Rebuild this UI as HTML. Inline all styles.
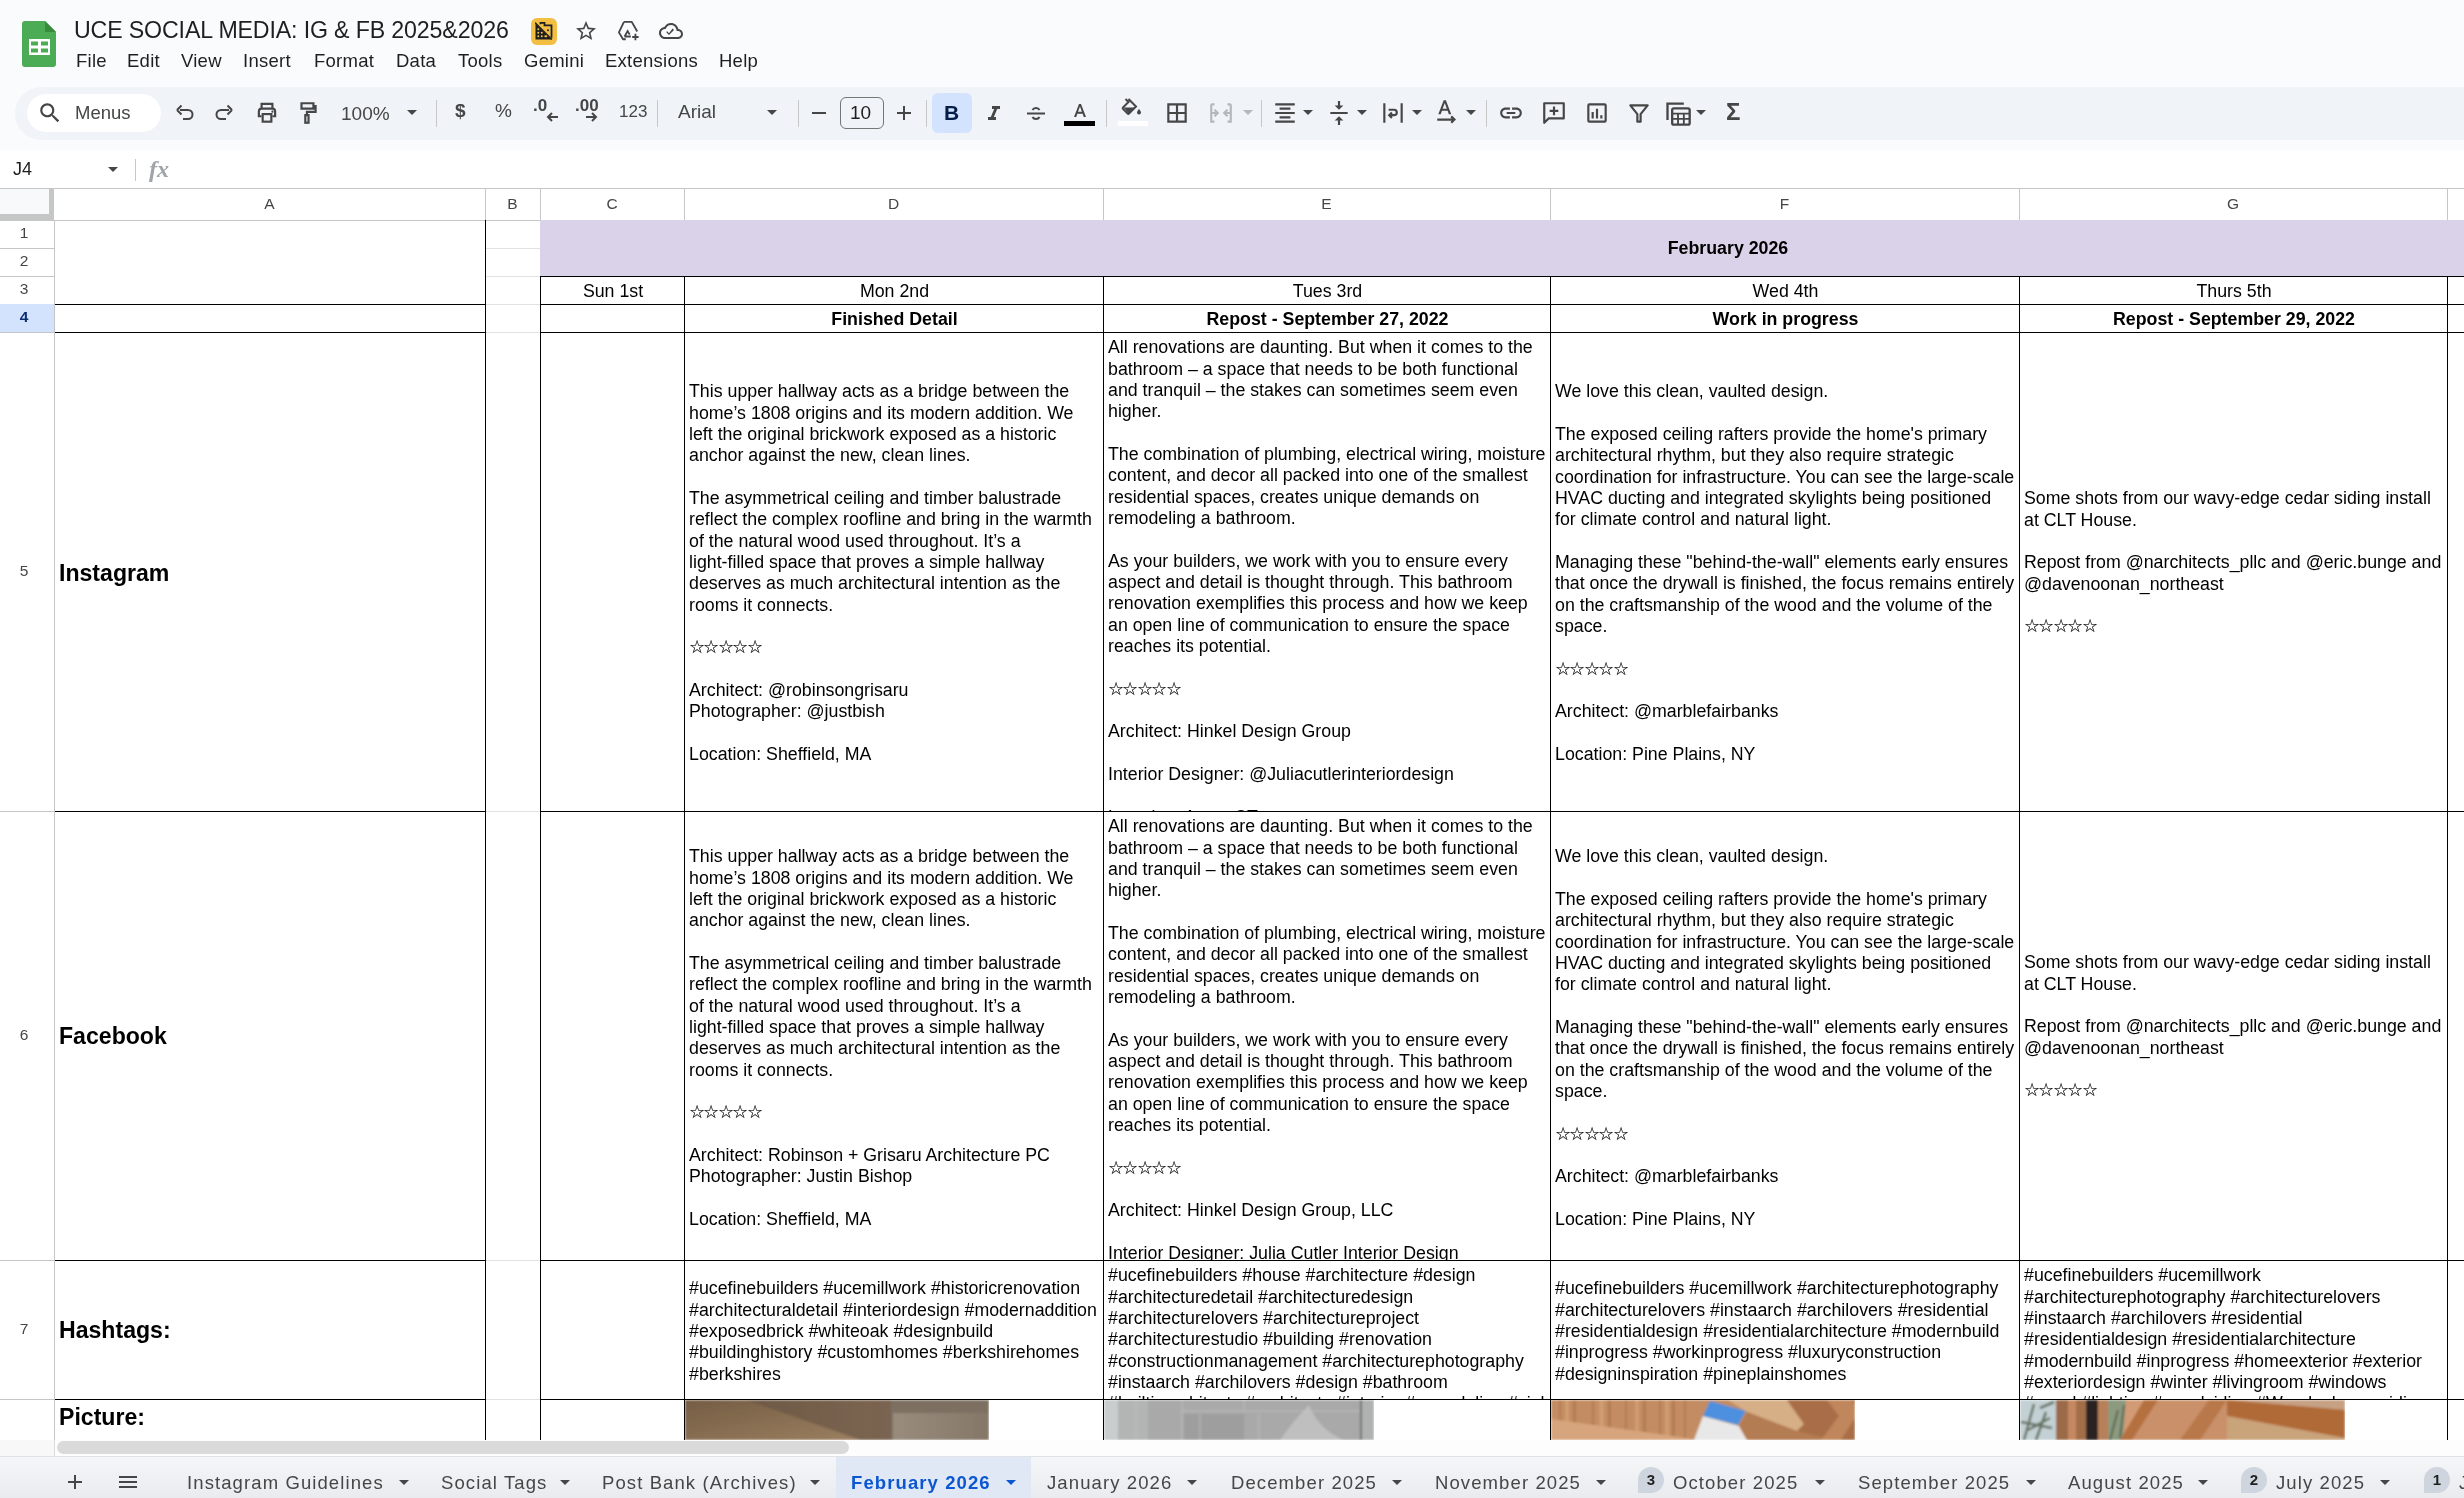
<!DOCTYPE html><html><head><meta charset="utf-8"><style>
html,body{margin:0;padding:0;}
body{width:2464px;height:1498px;overflow:hidden;position:relative;background:#f9fbfd;font-family:"Liberation Sans",sans-serif;color:#000;}
.cell{position:absolute;overflow:hidden;}
.ct{position:absolute;left:0;white-space:pre;font-size:17.78px;line-height:21.33px;}
.ic{position:absolute;}
</style></head><body><div style="position:absolute;left:0;top:0;width:2464px;height:1498px;will-change:transform">
<svg style="position:absolute;left:22px;top:21px" width="35" height="46" viewBox="0 0 35 46">
<path d="M3 0H23L34 11V43a3 3 0 0 1-3 3H3a3 3 0 0 1-3-3V3a3 3 0 0 1 3-3z" fill="#4cab55"/>
<path d="M23 0L34 11H23z" fill="#388a3c"/>
<rect x="7" y="18" width="21" height="16" fill="#fff"/>
<rect x="9" y="20.5" width="7" height="4" fill="#4cab55"/><rect x="19" y="20.5" width="7" height="4" fill="#4cab55"/>
<rect x="9" y="27.5" width="7" height="4" fill="#4cab55"/><rect x="19" y="27.5" width="7" height="4" fill="#4cab55"/>
</svg>
<div style="position:absolute;left:74px;top:14px;white-space:pre;font-size:23.2px;line-height:32px;color:#1f1f1f;letter-spacing:-0.15px;">UCE SOCIAL MEDIA: IG &amp; FB 2025&amp;2026</div>
<div style="position:absolute;left:531px;top:18px;width:26px;height:27px;border-radius:6px;background:#f2bf42"></div>
<svg style="position:absolute;left:535px;top:22px" width="18" height="18" viewBox="0 0 18 18">
<path d="M0.5 1.5L16.5 17.5H0.5z" fill="#1f1f1f"/>
<path d="M5.5 2.2V0.8h4v2.6h7v12.4" fill="none" stroke="#1f1f1f" stroke-width="1.8"/>
<circle cx="13" cy="8.3" r="1" fill="#1f1f1f"/>
<g fill="#f2bf42"><rect x="2.3" y="6.3" width="2" height="2" rx="1"/><rect x="2.3" y="9.8" width="2" height="2" rx="1"/><rect x="5.8" y="9.8" width="2" height="2" rx="1"/><rect x="2.3" y="13.3" width="2" height="2" rx="1"/><rect x="5.8" y="13.3" width="2" height="2" rx="1"/><rect x="9.3" y="13.3" width="3" height="2" rx="1"/></g>
<path d="M0 0.5L17 17.5" stroke="#1f1f1f" stroke-width="1.3"/>
</svg>
<svg style="position:absolute;left:574px;top:19px" width="24" height="24" viewBox="0 0 24 24" fill="#444746"><path d="M22 9.24l-7.19-.62L12 2 9.19 8.63 2 9.24l5.46 4.73L5.82 21 12 17.27 18.18 21l-1.63-7.03L22 9.24zM12 15.4l-3.76 2.27 1-4.28-3.32-2.88 4.38-.38L12 6.1l1.71 4.04 4.38.38-3.32 2.88 1 4.28L12 15.4z"/></svg>
<svg style="position:absolute;left:616px;top:20px" width="26" height="22" viewBox="0 0 26 24" fill="#444746"><path d="M7.5 2h8.5l6 10.5M9.5 21H6.5L2 13.5 7.5 2" fill="none" stroke="#444746" stroke-width="2" stroke-linejoin="round"/><path d="M8 18h7M8.2 18L11.5 12l2.3 4" fill="none" stroke="#444746" stroke-width="2"/><path d="M20 15v7M16.5 18.5h7" stroke="#444746" stroke-width="2"/></svg>
<svg style="position:absolute;left:659px;top:19px" width="24" height="24" viewBox="0 0 24 24" fill="#444746"><path d="M19.35 10.04C18.67 6.59 15.64 4 12 4 9.11 4 6.6 5.64 5.35 8.04 2.34 8.36 0 10.91 0 14c0 3.31 2.69 6 6 6h13c2.76 0 5-2.24 5-5 0-2.64-2.05-4.78-4.65-4.96zM19 18H6c-2.21 0-4-1.79-4-4 0-2.05 1.53-3.76 3.56-3.97l1.07-.11.5-.95C8.08 7.14 9.94 6 12 6c2.62 0 4.88 1.86 5.39 4.43l.3 1.5 1.53.11c1.56.1 2.78 1.41 2.78 2.96 0 1.650-1.35 3-3 3zm-9-3.82l-2.090-2.09L7.5 13.5 10 16l5.01-5.01-1.41-1.41z"/></svg>
<div style="position:absolute;left:76px;top:49px;white-space:pre;font-size:18.5px;line-height:24px;color:#1f1f1f;letter-spacing:0.25px;">File</div>
<div style="position:absolute;left:127px;top:49px;white-space:pre;font-size:18.5px;line-height:24px;color:#1f1f1f;letter-spacing:0.25px;">Edit</div>
<div style="position:absolute;left:181px;top:49px;white-space:pre;font-size:18.5px;line-height:24px;color:#1f1f1f;letter-spacing:0.25px;">View</div>
<div style="position:absolute;left:243px;top:49px;white-space:pre;font-size:18.5px;line-height:24px;color:#1f1f1f;letter-spacing:0.25px;">Insert</div>
<div style="position:absolute;left:314px;top:49px;white-space:pre;font-size:18.5px;line-height:24px;color:#1f1f1f;letter-spacing:0.25px;">Format</div>
<div style="position:absolute;left:396px;top:49px;white-space:pre;font-size:18.5px;line-height:24px;color:#1f1f1f;letter-spacing:0.25px;">Data</div>
<div style="position:absolute;left:458px;top:49px;white-space:pre;font-size:18.5px;line-height:24px;color:#1f1f1f;letter-spacing:0.25px;">Tools</div>
<div style="position:absolute;left:524px;top:49px;white-space:pre;font-size:18.5px;line-height:24px;color:#1f1f1f;letter-spacing:0.25px;">Gemini</div>
<div style="position:absolute;left:605px;top:49px;white-space:pre;font-size:18.5px;line-height:24px;color:#1f1f1f;letter-spacing:0.25px;">Extensions</div>
<div style="position:absolute;left:719px;top:49px;white-space:pre;font-size:18.5px;line-height:24px;color:#1f1f1f;letter-spacing:0.25px;">Help</div>
<div style="position:absolute;left:15px;top:87px;width:2500px;height:53px;border-radius:27px;background:#f0f3f8"></div>
<div style="position:absolute;left:27px;top:94px;width:134px;height:38px;border-radius:19px;background:#fff"></div>
<svg style="position:absolute;left:37px;top:100px" width="26" height="26" viewBox="0 0 24 24" fill="#444746"><path d="M15.5 14h-.79l-.28-.27C15.41 12.59 16 11.11 16 9.5 16 5.91 13.09 3 9.5 3S3 5.91 3 9.5 5.91 16 9.5 16c1.61 0 3.09-.59 4.23-1.57l.27.28v.79l5 4.99L20.49 19l-4.99-5zm-6 0C7.010 14 5 11.99 5 9.5S7.01 5 9.5 5 14 7.01 14 9.5 11.99 14 9.5 14z"/></svg>
<div style="position:absolute;left:75px;top:101px;white-space:pre;font-size:18.5px;line-height:24px;color:#444746;">Menus</div>
<svg style="position:absolute;left:172px;top:101px" width="24" height="24" viewBox="0 0 24 24" fill="#444746"><path d="M8 9H16a4.5 4.5 0 0 1 0 9H11" fill="none" stroke="#444746" stroke-width="2"/><path d="M5 9l4.5-4.5M5 9l4.5 4.5" fill="none" stroke="#444746" stroke-width="2"/></svg>
<svg style="position:absolute;left:213px;top:101px" width="24" height="24" viewBox="0 0 24 24" fill="#444746"><path d="M16 9H8a4.5 4.5 0 0 0 0 9H13" fill="none" stroke="#444746" stroke-width="2"/><path d="M19 9l-4.5-4.5M19 9l-4.5 4.5" fill="none" stroke="#444746" stroke-width="2"/></svg>
<svg style="position:absolute;left:254px;top:100px" width="26" height="26" viewBox="0 0 24 24" fill="#444746"><path d="M7 8V3.5h10V8M7 15H4.5V10.5a2.5 2.5 0 0 1 2.5-2.5h10a2.5 2.5 0 0 1 2.5 2.5V15H17" fill="none" stroke="#444746" stroke-width="2"/><rect x="8" y="13" width="8" height="7" fill="none" stroke="#444746" stroke-width="2"/><circle cx="17" cy="10.8" r="1"/></svg>
<svg style="position:absolute;left:295px;top:100px" width="26" height="26" viewBox="0 0 24 24" fill="#444746"><path d="M6 3h11v5H6zM17 5.5h2V11h-8v3" fill="none" stroke="#444746" stroke-width="2"/><rect x="9.5" y="14" width="3" height="7" fill="none" stroke="#444746" stroke-width="2"/></svg>
<div style="position:absolute;left:341px;top:102px;white-space:pre;font-size:19px;line-height:24px;color:#444746;">100%</div>
<svg style="position:absolute;left:404px;top:104px" width="16" height="16" viewBox="0 0 16 16" fill="#444746"><path d="M3 6l5 5 5-5z"/></svg>
<div style="position:absolute;left:436px;top:100px;width:1px;height:27px;background:#c7c7c7"></div>
<div style="position:absolute;left:455px;top:99px;white-space:pre;font-size:19px;line-height:24px;color:#444746;font-weight:bold;">$</div>
<div style="position:absolute;left:495px;top:99px;white-space:pre;font-size:19px;line-height:24px;color:#444746;">%</div>
<div style="position:absolute;left:533px;top:96px;white-space:pre;font-size:17px;line-height:20px;color:#444746;font-weight:bold;">.0</div>
<svg style="position:absolute;left:544px;top:110px" width="16" height="14" viewBox="0 0 16 14" fill="#444746"><path d="M14 7H4M8 3L4 7l4 4" fill="none" stroke="#444746" stroke-width="2"/></svg>
<div style="position:absolute;left:575px;top:96px;white-space:pre;font-size:17px;line-height:20px;color:#444746;font-weight:bold;">.00</div>
<svg style="position:absolute;left:584px;top:110px" width="16" height="14" viewBox="0 0 16 14" fill="#444746"><path d="M2 7h10M8 3l4 4-4 4" fill="none" stroke="#444746" stroke-width="2"/></svg>
<div style="position:absolute;left:619px;top:101px;white-space:pre;font-size:17px;line-height:22px;color:#444746;">123</div>
<div style="position:absolute;left:657px;top:100px;width:1px;height:27px;background:#c7c7c7"></div>
<div style="position:absolute;left:678px;top:100px;white-space:pre;font-size:19px;line-height:24px;color:#444746;">Arial</div>
<svg style="position:absolute;left:764px;top:104px" width="16" height="16" viewBox="0 0 16 16" fill="#444746"><path d="M3 6l5 5 5-5z"/></svg>
<div style="position:absolute;left:798px;top:100px;width:1px;height:27px;background:#c7c7c7"></div>
<div style="position:absolute;left:812px;top:112px;width:14px;height:2px;background:#444746"></div>
<div style="position:absolute;left:840px;top:97px;width:42px;height:30px;border:1px solid #747775;border-radius:6px;"></div>
<div style="position:absolute;left:850px;top:101px;white-space:pre;font-size:19px;line-height:24px;color:#1f1f1f;">10</div>
<div style="position:absolute;left:897px;top:112px;width:14px;height:2px;background:#444746"></div>
<div style="position:absolute;left:903px;top:106px;width:2px;height:14px;background:#444746"></div>
<div style="position:absolute;left:926px;top:100px;width:1px;height:27px;background:#c7c7c7"></div>
<div style="position:absolute;left:932px;top:93px;width:40px;height:40px;border-radius:6px;background:#d3e3fd"></div>
<div style="position:absolute;left:944px;top:100px;white-space:pre;font-size:21px;line-height:26px;font-weight:bold;color:#041e49;">B</div>
<svg style="position:absolute;left:982px;top:100px" width="24" height="26" viewBox="0 0 24 24" fill="#444746"><path d="M10 4v3h2.21l-3.42 8H6v3h8v-3h-2.21l3.42-8H18V4z" transform="translate(0,1)"/></svg>
<svg style="position:absolute;left:1024px;top:100px" width="24" height="26" viewBox="0 0 24 24" fill="#444746"><path d="M3 12.5h18" stroke="#444746" stroke-width="2"/><path d="M15.5 9a3.8 3.2 0 0 0-7 0M8.5 16a3.8 3.2 0 0 0 7 0" fill="none" stroke="#444746" stroke-width="2"/></svg>
<svg style="position:absolute;left:1063px;top:99px" width="34" height="24" viewBox="0 0 34 24" fill="#444746"><path d="M11 18L16 5h2l5 13h-2.2l-1.2-3.3h-5.2L13.2 18zM15 12.8h3.9L17 7.5z"/></svg>
<div style="position:absolute;left:1064px;top:121px;width:31px;height:5px;background:#000"></div>
<div style="position:absolute;left:1106px;top:100px;width:1px;height:27px;background:#c7c7c7"></div>
<svg style="position:absolute;left:1118px;top:97px" width="30" height="26" viewBox="0 0 30 26" fill="#444746"><path d="M7.5 2l3 3-5.5 5.5a1 1 0 0 0 0 1.4l4.6 4.6a1 1 0 0 0 1.4 0L18 9.5 10.5 2" fill="none" stroke="#444746" stroke-width="2"/><path d="M5.5 10.5h12L11 17z"/><path d="M21 12s-2 2.2-2 3.5a2 2 0 0 0 4 0c0-1.3-2-3.5-2-3.5z"/></svg>
<div style="position:absolute;left:1118px;top:121px;width:30px;height:5px;background:#fff"></div>
<svg style="position:absolute;left:1164px;top:100px" width="26" height="26" viewBox="0 0 24 24" fill="#444746"><path d="M3 3v18h18V3H3zm8 16H5v-6h6v6zm0-8H5V5h6v6zm8 8h-6v-6h6v6zm0-8h-6V5h6v6z"/></svg>
<svg style="position:absolute;left:1208px;top:100px" width="26" height="26" viewBox="0 0 24 24" fill="#444746"><path d="M3 4h3M3 4v16h3M21 4h-3M21 4v16h-3M3 12h6M6 9l3 3-3 3M21 12h-6M18 9l-3 3 3 3" fill="none" stroke="#b4b7bb" stroke-width="2"/></svg>
<svg style="position:absolute;left:1240px;top:104px" width="16" height="16" viewBox="0 0 16 16" fill="#b4b7bb"><path d="M3 6l5 5 5-5z"/></svg>
<div style="position:absolute;left:1261px;top:100px;width:1px;height:27px;background:#c7c7c7"></div>
<svg style="position:absolute;left:1272px;top:100px" width="26" height="26" viewBox="0 0 24 24" fill="#444746"><path d="M7 15v2h10v-2H7zm-4 6h18v-2H3v2zm0-8h18v-2H3v2zm4-6v2h10V7H7zM3 3v2h18V3H3z"/></svg>
<svg style="position:absolute;left:1300px;top:104px" width="16" height="16" viewBox="0 0 16 16" fill="#444746"><path d="M3 6l5 5 5-5z"/></svg>
<svg style="position:absolute;left:1326px;top:100px" width="26" height="26" viewBox="0 0 24 24" fill="#444746"><path d="M8 19h3v4h2v-4h3l-4-4-4 4zm8-14h-3V1h-2v4H8l4 4 4-4zM4 11v2h16v-2H4z"/></svg>
<svg style="position:absolute;left:1354px;top:104px" width="16" height="16" viewBox="0 0 16 16" fill="#444746"><path d="M3 6l5 5 5-5z"/></svg>
<svg style="position:absolute;left:1380px;top:100px" width="26" height="26" viewBox="0 0 24 24" fill="#444746"><path d="M4 3v18M20 3v18" stroke="#444746" stroke-width="2"/><path d="M8 9h5a2.5 2.5 0 0 1 0 5H9M11 11.5l-2.5 2.5 2.5 2.5" fill="none" stroke="#444746" stroke-width="2"/></svg>
<svg style="position:absolute;left:1409px;top:104px" width="16" height="16" viewBox="0 0 16 16" fill="#444746"><path d="M3 6l5 5 5-5z"/></svg>
<svg style="position:absolute;left:1434px;top:97px" width="28" height="28" viewBox="0 0 26 26" fill="#444746"><path d="M4 16L9 3h2l5 13h-2.2l-1.2-3.3H7.4L6.2 16zM8 10.8h3.9L10 5.5z"/><path d="M3 21h15M16 18l3 3-3 3" fill="none" stroke="#444746" stroke-width="2"/></svg>
<svg style="position:absolute;left:1463px;top:104px" width="16" height="16" viewBox="0 0 16 16" fill="#444746"><path d="M3 6l5 5 5-5z"/></svg>
<div style="position:absolute;left:1486px;top:100px;width:1px;height:27px;background:#c7c7c7"></div>
<svg style="position:absolute;left:1498px;top:100px" width="26" height="26" viewBox="0 0 24 24" fill="#444746"><path d="M3.9 12c0-1.71 1.39-3.1 3.1-3.1h4V7H7c-2.76 0-5 2.24-5 5s2.24 5 5 5h4v-1.9H7c-1.71 0-3.1-1.39-3.1-3.1zM8 13h8v-2H8v2zm9-6h-4v1.9h4c1.71 0 3.1 1.39 3.1 3.1s-1.39 3.1-3.1 3.1h-4V17h4c2.76 0 5-2.24 5-5s-2.24-5-5-5z"/></svg>
<svg style="position:absolute;left:1541px;top:100px" width="26" height="26" viewBox="0 0 24 24" fill="#444746"><path d="M3 3h18v14H7l-4 4z" fill="none" stroke="#444746" stroke-width="2" stroke-linejoin="round"/><path d="M12 6v8M8 10h8" stroke="#444746" stroke-width="2"/></svg>
<svg style="position:absolute;left:1584px;top:100px" width="26" height="26" viewBox="0 0 24 24" fill="#444746"><rect x="4" y="4" width="16" height="16" rx="1" fill="none" stroke="#444746" stroke-width="2"/><path d="M8 11v6M12 8v9M16 14v3" stroke="#444746" stroke-width="2"/></svg>
<svg style="position:absolute;left:1626px;top:100px" width="26" height="26" viewBox="0 0 24 24" fill="#444746"><path d="M4 5h16l-6.5 8v7h-3v-7z" fill="none" stroke="#444746" stroke-width="2" stroke-linejoin="round"/></svg>
<svg style="position:absolute;left:1664px;top:99px" width="28" height="28" viewBox="0 0 24 24" fill="#444746"><path d="M3 18V4h14" fill="none" stroke="#444746" stroke-width="2"/><rect x="7" y="8" width="15" height="14" rx="1.5" fill="none" stroke="#444746" stroke-width="2"/><path d="M7 12.5h15M7 17h15M12 12.5v9.5M17 12.5v9.5" stroke="#444746" stroke-width="1.6"/></svg>
<svg style="position:absolute;left:1693px;top:104px" width="16" height="16" viewBox="0 0 16 16" fill="#444746"><path d="M3 6l5 5 5-5z"/></svg>
<div style="position:absolute;left:1726px;top:97px;white-space:pre;font-size:24px;line-height:30px;color:#444746;font-weight:bold;">&#931;</div>
<div style="position:absolute;left:0px;top:150px;width:2464px;height:38px;background:#fff"></div>
<div style="position:absolute;left:13px;top:157px;white-space:pre;font-size:18px;line-height:24px;color:#1f1f1f;">J4</div>
<svg style="position:absolute;left:105px;top:161px" width="16" height="16" viewBox="0 0 16 16" fill="#444746"><path d="M3 6l5 5 5-5z"/></svg>
<div style="position:absolute;left:135px;top:159px;width:1px;height:22px;background:#c7c7c7"></div>
<div style="position:absolute;left:149px;top:155px;white-space:pre;font-family:Liberation Serif,serif;font-size:24px;line-height:28px;color:#a0a3a7;font-weight:bold;"><i>fx</i></div>
<div style="position:absolute;left:0;top:188px;width:2464px;height:1252px;overflow:hidden;background:#fff">
<div style="position:absolute;left:0px;top:0px;width:49px;height:26px;background:#f8f9fa"></div>
<div style="position:absolute;left:49px;top:0px;width:6px;height:33px;background:#c4c7c5"></div>
<div style="position:absolute;left:0px;top:26px;width:55px;height:7px;background:#c4c7c5"></div>
<div style="position:absolute;left:54px;top:0px;width:2410px;height:32px;background:#fff"></div>
<div style="position:absolute;left:0px;top:0px;width:2464px;height:1px;background:#c4c7c5"></div>
<div style="position:absolute;left:54px;top:32px;width:2410px;height:1px;background:#c4c7c5"></div>
<div style="position:absolute;left:485px;top:0px;width:1px;height:32px;background:#c4c7c5"></div>
<div style="position:absolute;left:54px;top:5px;white-space:pre;width:431px;text-align:center;font-size:15.5px;line-height:22px;color:#444746;">A</div>
<div style="position:absolute;left:540px;top:0px;width:1px;height:32px;background:#c4c7c5"></div>
<div style="position:absolute;left:485px;top:5px;white-space:pre;width:55px;text-align:center;font-size:15.5px;line-height:22px;color:#444746;">B</div>
<div style="position:absolute;left:684px;top:0px;width:1px;height:32px;background:#c4c7c5"></div>
<div style="position:absolute;left:540px;top:5px;white-space:pre;width:144px;text-align:center;font-size:15.5px;line-height:22px;color:#444746;">C</div>
<div style="position:absolute;left:1103px;top:0px;width:1px;height:32px;background:#c4c7c5"></div>
<div style="position:absolute;left:684px;top:5px;white-space:pre;width:419px;text-align:center;font-size:15.5px;line-height:22px;color:#444746;">D</div>
<div style="position:absolute;left:1550px;top:0px;width:1px;height:32px;background:#c4c7c5"></div>
<div style="position:absolute;left:1103px;top:5px;white-space:pre;width:447px;text-align:center;font-size:15.5px;line-height:22px;color:#444746;">E</div>
<div style="position:absolute;left:2019px;top:0px;width:1px;height:32px;background:#c4c7c5"></div>
<div style="position:absolute;left:1550px;top:5px;white-space:pre;width:469px;text-align:center;font-size:15.5px;line-height:22px;color:#444746;">F</div>
<div style="position:absolute;left:2447px;top:0px;width:1px;height:32px;background:#c4c7c5"></div>
<div style="position:absolute;left:2019px;top:5px;white-space:pre;width:428px;text-align:center;font-size:15.5px;line-height:22px;color:#444746;">G</div>
<div style="position:absolute;left:2700px;top:0px;width:1px;height:32px;background:#c4c7c5"></div>
<div style="position:absolute;left:2447px;top:5px;white-space:pre;width:253px;text-align:center;font-size:15.5px;line-height:22px;color:#444746;">H</div>
<div style="position:absolute;left:54px;top:32px;width:1px;height:1300px;background:#c4c7c5"></div>
<div style="position:absolute;left:0px;top:60px;width:54px;height:1px;background:#c4c7c5"></div>
<div style="position:absolute;left:0px;top:34.0px;white-space:pre;width:48px;text-align:center;font-size:15.5px;line-height:22px;color:#444746;">1</div>
<div style="position:absolute;left:0px;top:88px;width:54px;height:1px;background:#c4c7c5"></div>
<div style="position:absolute;left:0px;top:62.0px;white-space:pre;width:48px;text-align:center;font-size:15.5px;line-height:22px;color:#444746;">2</div>
<div style="position:absolute;left:0px;top:116px;width:54px;height:1px;background:#c4c7c5"></div>
<div style="position:absolute;left:0px;top:90.0px;white-space:pre;width:48px;text-align:center;font-size:15.5px;line-height:22px;color:#444746;">3</div>
<div style="position:absolute;left:0px;top:116px;width:54px;height:28px;background:#d3e3fd"></div>
<div style="position:absolute;left:0px;top:144px;width:54px;height:1px;background:#c4c7c5"></div>
<div style="position:absolute;left:0px;top:118.0px;white-space:pre;width:48px;text-align:center;font-size:15.5px;line-height:22px;font-weight:bold;color:#0b2e73;">4</div>
<div style="position:absolute;left:0px;top:623px;width:54px;height:1px;background:#c4c7c5"></div>
<div style="position:absolute;left:0px;top:371.5px;white-space:pre;width:48px;text-align:center;font-size:15.5px;line-height:22px;color:#444746;">5</div>
<div style="position:absolute;left:0px;top:1072px;width:54px;height:1px;background:#c4c7c5"></div>
<div style="position:absolute;left:0px;top:835.5px;white-space:pre;width:48px;text-align:center;font-size:15.5px;line-height:22px;color:#444746;">6</div>
<div style="position:absolute;left:0px;top:1211px;width:54px;height:1px;background:#c4c7c5"></div>
<div style="position:absolute;left:0px;top:1129.5px;white-space:pre;width:48px;text-align:center;font-size:15.5px;line-height:22px;color:#444746;">7</div>
<div style="position:absolute;left:0px;top:1412px;width:54px;height:1px;background:#c4c7c5"></div>
<div style="position:absolute;left:540px;top:32px;width:1924px;height:56px;background:#d9d2e9"></div>
<div style="position:absolute;left:486px;top:60px;width:54px;height:1px;background:#e2e2e2"></div>
<div style="position:absolute;left:486px;top:88px;width:54px;height:1px;background:#e2e2e2"></div>
<div style="position:absolute;left:486px;top:116px;width:54px;height:1px;background:#e2e2e2"></div>
<div style="position:absolute;left:486px;top:144px;width:54px;height:1px;background:#e2e2e2"></div>
<div style="position:absolute;left:486px;top:623px;width:54px;height:1px;background:#e2e2e2"></div>
<div style="position:absolute;left:486px;top:1072px;width:54px;height:1px;background:#e2e2e2"></div>
<div style="position:absolute;left:486px;top:1211px;width:54px;height:1px;background:#e2e2e2"></div>
<div style="position:absolute;left:486px;top:1412px;width:54px;height:1px;background:#e2e2e2"></div>
<div style="position:absolute;left:485px;top:32px;width:1px;height:1300px;background:#000"></div>
<div style="position:absolute;left:540px;top:88px;width:1px;height:1300px;background:#000"></div>
<div style="position:absolute;left:684px;top:88px;width:1px;height:1300px;background:#000"></div>
<div style="position:absolute;left:1103px;top:88px;width:1px;height:1300px;background:#000"></div>
<div style="position:absolute;left:1550px;top:88px;width:1px;height:1300px;background:#000"></div>
<div style="position:absolute;left:2019px;top:88px;width:1px;height:1300px;background:#000"></div>
<div style="position:absolute;left:2447px;top:88px;width:1px;height:1300px;background:#000"></div>
<div style="position:absolute;left:540px;top:88px;width:1924px;height:1px;background:#000"></div>
<div style="position:absolute;left:55px;top:116px;width:430px;height:1px;background:#000"></div>
<div style="position:absolute;left:540px;top:116px;width:1924px;height:1px;background:#000"></div>
<div style="position:absolute;left:55px;top:144px;width:430px;height:1px;background:#000"></div>
<div style="position:absolute;left:540px;top:144px;width:1924px;height:1px;background:#000"></div>
<div style="position:absolute;left:55px;top:623px;width:430px;height:1px;background:#000"></div>
<div style="position:absolute;left:540px;top:623px;width:1924px;height:1px;background:#000"></div>
<div style="position:absolute;left:55px;top:1072px;width:430px;height:1px;background:#000"></div>
<div style="position:absolute;left:540px;top:1072px;width:1924px;height:1px;background:#000"></div>
<div style="position:absolute;left:55px;top:1211px;width:430px;height:1px;background:#000"></div>
<div style="position:absolute;left:540px;top:1211px;width:1924px;height:1px;background:#000"></div>
<div style="position:absolute;left:540px;top:48px;white-space:pre;width:2376px;text-align:center;font-weight:bold;font-size:17.78px;line-height:24px;">February 2026</div>
<div style="position:absolute;left:541px;top:91px;white-space:pre;width:144px;text-align:center;font-size:17.78px;line-height:24px;">Sun 1st</div>
<div style="position:absolute;left:685px;top:91px;white-space:pre;width:419px;text-align:center;font-size:17.78px;line-height:24px;">Mon 2nd</div>
<div style="position:absolute;left:1104px;top:91px;white-space:pre;width:447px;text-align:center;font-size:17.78px;line-height:24px;">Tues 3rd</div>
<div style="position:absolute;left:1551px;top:91px;white-space:pre;width:469px;text-align:center;font-size:17.78px;line-height:24px;">Wed 4th</div>
<div style="position:absolute;left:2020px;top:91px;white-space:pre;width:428px;text-align:center;font-size:17.78px;line-height:24px;">Thurs 5th</div>
<div style="position:absolute;left:685px;top:119px;white-space:pre;width:419px;text-align:center;font-weight:bold;font-size:17.78px;line-height:24px;">Finished Detail</div>
<div style="position:absolute;left:1104px;top:119px;white-space:pre;width:447px;text-align:center;font-weight:bold;font-size:17.78px;line-height:24px;">Repost - September 27, 2022</div>
<div style="position:absolute;left:1551px;top:119px;white-space:pre;width:469px;text-align:center;font-weight:bold;font-size:17.78px;line-height:24px;">Work in progress</div>
<div style="position:absolute;left:2020px;top:119px;white-space:pre;width:428px;text-align:center;font-weight:bold;font-size:17.78px;line-height:24px;">Repost - September 29, 2022</div>
<div style="position:absolute;left:59px;top:371px;white-space:pre;font-weight:bold;font-size:23.1px;line-height:28px;">Instagram</div>
<div style="position:absolute;left:59px;top:834px;white-space:pre;font-weight:bold;font-size:23.1px;line-height:28px;">Facebook</div>
<div style="position:absolute;left:59px;top:1128px;white-space:pre;font-weight:bold;font-size:23.1px;line-height:28px;">Hashtags:</div>
<div style="position:absolute;left:59px;top:1215px;white-space:pre;font-weight:bold;font-size:23.1px;line-height:28px;">Picture:</div>
<div class="cell" style="left:685px;top:145px;width:418px;height:478px">
<div class="ct" style="left:4px;top:48.30000000000001px">This upper hallway acts as a bridge between the
home&#8217;s 1808 origins and its modern addition. We
left the original brickwork exposed as a historic
anchor against the new, clean lines.

The asymmetrical ceiling and timber balustrade
reflect the complex roofline and bring in the warmth
of the natural wood used throughout. It&#8217;s a
light-filled space that proves a simple hallway
deserves as much architectural intention as the
rooms it connects.

<span style="letter-spacing:-1.45px;-webkit-text-stroke:0.15px #000;margin-left:-0.4px">&#9734;&#9734;&#9734;&#9734;&#9734;</span>

Architect: @robinsongrisaru
Photographer: @justbish

Location: Sheffield, MA</div>
</div>
<div class="cell" style="left:1104px;top:145px;width:446px;height:478px">
<div class="ct" style="left:4px;top:4.300000000000011px">All renovations are daunting. But when it comes to the
bathroom &#8211; a space that needs to be both functional
and tranquil &#8211; the stakes can sometimes seem even
higher.

The combination of plumbing, electrical wiring, moisture
content, and decor all packed into one of the smallest
residential spaces, creates unique demands on
remodeling a bathroom.

As your builders, we work with you to ensure every
aspect and detail is thought through. This bathroom
renovation exemplifies this process and how we keep
an open line of communication to ensure the space
reaches its potential.

<span style="letter-spacing:-1.45px;-webkit-text-stroke:0.15px #000;margin-left:-0.4px">&#9734;&#9734;&#9734;&#9734;&#9734;</span>

Architect: Hinkel Design Group

Interior Designer: @Juliacutlerinteriordesign

Location: Avon, CT</div>
</div>
<div class="cell" style="left:1551px;top:145px;width:468px;height:478px">
<div class="ct" style="left:4px;top:48.30000000000001px">We love this clean, vaulted design.

The exposed ceiling rafters provide the home's primary
architectural rhythm, but they also require strategic
coordination for infrastructure. You can see the large-scale
HVAC ducting and integrated skylights being positioned
for climate control and natural light.

Managing these "behind-the-wall" elements early ensures
that once the drywall is finished, the focus remains entirely
on the craftsmanship of the wood and the volume of the
space.

<span style="letter-spacing:-1.45px;-webkit-text-stroke:0.15px #000;margin-left:-0.4px">&#9734;&#9734;&#9734;&#9734;&#9734;</span>

Architect: @marblefairbanks

Location: Pine Plains, NY</div>
</div>
<div class="cell" style="left:2020px;top:145px;width:427px;height:478px">
<div class="ct" style="left:4px;top:155.3px">Some shots from our wavy-edge cedar siding install
at CLT House.

Repost from @narchitects_pllc and @eric.bunge and
@davenoonan_northeast

<span style="letter-spacing:-1.45px;-webkit-text-stroke:0.15px #000;margin-left:-0.4px">&#9734;&#9734;&#9734;&#9734;&#9734;</span></div>
</div>
<div class="cell" style="left:685px;top:624px;width:418px;height:448px">
<div class="ct" style="left:4px;top:34.299999999999955px">This upper hallway acts as a bridge between the
home&#8217;s 1808 origins and its modern addition. We
left the original brickwork exposed as a historic
anchor against the new, clean lines.

The asymmetrical ceiling and timber balustrade
reflect the complex roofline and bring in the warmth
of the natural wood used throughout. It&#8217;s a
light-filled space that proves a simple hallway
deserves as much architectural intention as the
rooms it connects.

<span style="letter-spacing:-1.45px;-webkit-text-stroke:0.15px #000;margin-left:-0.4px">&#9734;&#9734;&#9734;&#9734;&#9734;</span>

Architect: Robinson + Grisaru Architecture PC
Photographer: Justin Bishop

Location: Sheffield, MA</div>
</div>
<div class="cell" style="left:1104px;top:624px;width:446px;height:448px">
<div class="ct" style="left:4px;top:4.2999999999999545px">All renovations are daunting. But when it comes to the
bathroom &#8211; a space that needs to be both functional
and tranquil &#8211; the stakes can sometimes seem even
higher.

The combination of plumbing, electrical wiring, moisture
content, and decor all packed into one of the smallest
residential spaces, creates unique demands on
remodeling a bathroom.

As your builders, we work with you to ensure every
aspect and detail is thought through. This bathroom
renovation exemplifies this process and how we keep
an open line of communication to ensure the space
reaches its potential.

<span style="letter-spacing:-1.45px;-webkit-text-stroke:0.15px #000;margin-left:-0.4px">&#9734;&#9734;&#9734;&#9734;&#9734;</span>

Architect: Hinkel Design Group, LLC

Interior Designer: Julia Cutler Interior Design

Location: Avon, CT</div>
</div>
<div class="cell" style="left:1551px;top:624px;width:468px;height:448px">
<div class="ct" style="left:4px;top:34.299999999999955px">We love this clean, vaulted design.

The exposed ceiling rafters provide the home's primary
architectural rhythm, but they also require strategic
coordination for infrastructure. You can see the large-scale
HVAC ducting and integrated skylights being positioned
for climate control and natural light.

Managing these "behind-the-wall" elements early ensures
that once the drywall is finished, the focus remains entirely
on the craftsmanship of the wood and the volume of the
space.

<span style="letter-spacing:-1.45px;-webkit-text-stroke:0.15px #000;margin-left:-0.4px">&#9734;&#9734;&#9734;&#9734;&#9734;</span>

Architect: @marblefairbanks

Location: Pine Plains, NY</div>
</div>
<div class="cell" style="left:2020px;top:624px;width:427px;height:448px">
<div class="ct" style="left:4px;top:140.29999999999995px">Some shots from our wavy-edge cedar siding install
at CLT House.

Repost from @narchitects_pllc and @eric.bunge and
@davenoonan_northeast

<span style="letter-spacing:-1.45px;-webkit-text-stroke:0.15px #000;margin-left:-0.4px">&#9734;&#9734;&#9734;&#9734;&#9734;</span></div>
</div>
<div class="cell" style="left:685px;top:1073px;width:418px;height:138px">
<div class="ct" style="left:4px;top:17.299999999999955px">#ucefinebuilders #ucemillwork #historicrenovation
#architecturaldetail #interiordesign #modernaddition
#exposedbrick #whiteoak #designbuild
#buildinghistory #customhomes #berkshirehomes
#berkshires</div>
</div>
<div class="cell" style="left:1104px;top:1073px;width:446px;height:138px">
<div class="ct" style="left:4px;top:4.2999999999999545px">#ucefinebuilders #house #architecture #design
#architecturedetail #architecturedesign
#architecturelovers #architectureproject
#architecturestudio #building #renovation
#constructionmanagement #architecturephotography
#instaarch #archilovers #design #bathroom
#builtinarchitects #architects #interior #remodeling #sink</div>
</div>
<div class="cell" style="left:1551px;top:1073px;width:468px;height:138px">
<div class="ct" style="left:4px;top:17.299999999999955px">#ucefinebuilders #ucemillwork #architecturephotography
#architecturelovers #instaarch #archilovers #residential
#residentialdesign #residentialarchitecture #modernbuild
#inprogress #workinprogress #luxuryconstruction
#designinspiration #pineplainshomes</div>
</div>
<div class="cell" style="left:2020px;top:1073px;width:427px;height:138px">
<div class="ct" style="left:4px;top:4.2999999999999545px">#ucefinebuilders #ucemillwork
#architecturephotography #architecturelovers
#instaarch #archilovers #residential
#residentialdesign #residentialarchitecture
#modernbuild #inprogress #homeexterior #exterior
#exteriordesign #winter #livingroom #windows
#wood #lighting #woodsiding #Woodenhousesiding</div>
</div>
<svg style="position:absolute;left:685px;top:1212px" width="304" height="40" viewBox="0 0 304 40"><defs><filter id="bl1" x="0" y="0" width="100%" height="100%"><feGaussianBlur stdDeviation="0.8" edgeMode="duplicate"/></filter></defs><g filter="url(#bl1)"><defs><linearGradient id="d1" x1="0" y1="0" x2="1" y2="1"><stop offset="0" stop-color="#745d44"/><stop offset="1" stop-color="#9c7f60"/></linearGradient>
<linearGradient id="d2" x1="0" y1="0" x2="1" y2="0"><stop offset="0" stop-color="#67533f"/><stop offset="0.6" stop-color="#7a6450"/><stop offset="1" stop-color="#736556"/></linearGradient>
<linearGradient id="d3" x1="0" y1="0" x2="1" y2="0"><stop offset="0" stop-color="#9a8c7d"/><stop offset="1" stop-color="#857767"/></linearGradient></defs>
<rect width="304" height="40" fill="url(#d2)"/>
<polygon points="0,0 61,0 176,40 0,40" fill="url(#d1)"/>
<rect x="206" y="0" width="98" height="40" fill="#7d7062"/>
<rect x="208" y="13" width="96" height="27" fill="url(#d3)"/></g></svg>
<svg style="position:absolute;left:1104px;top:1212px" width="270" height="40" viewBox="0 0 270 40"><defs><filter id="bl2" x="0" y="0" width="100%" height="100%"><feGaussianBlur stdDeviation="0.8" edgeMode="duplicate"/></filter></defs><g filter="url(#bl2)"><rect width="270" height="40" fill="#a9a9a9"/>
<rect x="0" width="14" height="40" fill="#c9cdce"/><rect x="14" width="30" height="40" fill="#b3b5b5"/>
<rect x="80" y="14" width="60" height="26" fill="#9a9a9a" opacity="0.7"/>
<path d="M32 0V40M78 0V40M78 11H270M140 0V11M96 14V40M155 14V40M260 0V40" stroke="#bdbdbd" stroke-width="1"/>
<path d="M176 40 Q190 20 205 5 Q215 30 240 40Z" fill="#c4c4c4" opacity="0.8"/>
<rect x="256" width="2" height="40" fill="#6f6f6f"/><rect x="258" width="12" height="40" fill="#b0b2b2"/></g></svg>
<svg style="position:absolute;left:1551px;top:1212px" width="304" height="40" viewBox="0 0 304 40"><defs><filter id="bl3" x="0" y="0" width="100%" height="100%"><feGaussianBlur stdDeviation="0.8" edgeMode="duplicate"/></filter></defs><g filter="url(#bl3)"><rect width="304" height="40" fill="#c38c62"/>
<g fill="#a9704a" opacity="0.55"><rect x="8" width="2" height="40"/><rect x="22" width="3" height="40"/><rect x="41" width="2" height="40"/><rect x="57" width="3" height="40"/><rect x="74" width="2" height="40"/><rect x="92" width="3" height="40"/><rect x="108" width="2" height="40"/><rect x="121" width="3" height="40"/><rect x="133" width="2" height="40"/></g>
<g fill="#d9a67c" opacity="0.6"><rect x="14" width="4" height="40"/><rect x="48" width="5" height="40"/><rect x="84" width="4" height="40"/><rect x="114" width="4" height="40"/></g>
<polygon points="0,19 150,40 0,40" fill="#d7a57d"/>
<polygon points="143,40 152,16 188,26 196,40" fill="#e8e8e8"/>
<polygon points="159,1 195,11 187,25 152,16" fill="#4d90df"/>
<polygon points="177,0 236,0 253,24 246,31 196,12" fill="#d6af86"/>
<polygon points="188,26 196,12 246,31 282,40 196,40" fill="#b47b52"/>
<polygon points="236,0 304,0 304,40 282,40 246,31 253,24" fill="#a96e47"/>
<polygon points="276,0 300,0 304,4 304,18 290,40 270,40 288,16" fill="#c58c62" opacity="0.8"/></g></svg>
<svg style="position:absolute;left:2020px;top:1212px" width="325" height="40" viewBox="0 0 325 40"><defs><filter id="bl4" x="0" y="0" width="100%" height="100%"><feGaussianBlur stdDeviation="0.8" edgeMode="duplicate"/></filter></defs><g filter="url(#bl4)"><rect width="325" height="40" fill="#c9906a"/>
<rect x="0" width="36" height="40" fill="#c3d0d4"/>
<path d="M4 40L14 4M16 40L26 12M1 22L32 28M20 8L34 2M8 30L30 18" stroke="#4f5d49" stroke-width="2.5" opacity="0.8"/>
<rect x="36" width="12" height="40" fill="#9b6a4a"/><rect x="48" width="8" height="40" fill="#c48960"/>
<rect x="56" width="10" height="40" fill="#a26e48"/><rect x="66" width="12" height="40" fill="#2a2420"/>
<rect x="78" width="10" height="40" fill="#b88058"/><rect x="88" width="18" height="40" fill="#8c9a7e"/>
<path d="M90 40L98 10M100 38L104 5" stroke="#4f5d49" stroke-width="2" opacity="0.8"/>
<polygon points="106,0 138,0 112,40 103,40" fill="#d39b74"/>
<polygon points="124,0 138,0 112,40 100,40" fill="#b5703f"/>
<polygon points="189,0 207,0 180,40 160,40" fill="#b8784a"/>
<polygon points="207,0 325,0 325,10" fill="#c6a184"/>
<polygon points="207,0 325,10 325,38 207,16" fill="#b06a38"/>
<polygon points="207,16 325,38 325,40 207,40" fill="#c9a37a"/></g></svg>
</div>
<div style="position:absolute;left:0px;top:1440px;width:2464px;height:16px;background:#fdfdfd"></div>
<div style="position:absolute;left:0px;top:1440px;width:54px;height:16px;background:#f8f8f8"></div>
<div style="position:absolute;left:54px;top:1440px;width:1px;height:16px;background:#dadce0"></div>
<div style="position:absolute;left:57px;top:1441px;width:792px;height:13px;background:#dadada;border-radius:7px"></div>
<div style="position:absolute;left:0px;top:1456px;width:2464px;height:1px;background:#e0e2e5"></div>
<div style="position:absolute;left:0px;top:1457px;width:2464px;height:41px;background:linear-gradient(180deg,#f5f6f8,#e9ebee)"></div>
<svg style="position:absolute;left:63px;top:1470px" width="24" height="24" viewBox="0 0 24 24" fill="#444746"><path d="M19 13h-6v6h-2v-6H5v-2h6V5h2v6h6v2z"/></svg>
<svg style="position:absolute;left:116px;top:1470px" width="24" height="24" viewBox="0 0 24 24" fill="#444746"><path d="M3 18h18v-2H3v2zm0-5h18v-2H3v2zm0-7v2h18V6H3z"/></svg>
<div style="position:absolute;left:836px;top:1457px;width:195px;height:41px;background:#e1e8f5"></div>
<div style="position:absolute;left:187px;top:1471px;white-space:pre;font-size:18.5px;line-height:24px;color:#444746;letter-spacing:1.1px;">Instagram Guidelines</div>
<div style="position:absolute;left:441px;top:1471px;white-space:pre;font-size:18.5px;line-height:24px;color:#444746;letter-spacing:1.1px;">Social Tags</div>
<div style="position:absolute;left:602px;top:1471px;white-space:pre;font-size:18.5px;line-height:24px;color:#444746;letter-spacing:1.1px;">Post Bank (Archives)</div>
<div style="position:absolute;left:851px;top:1471px;white-space:pre;font-size:18.5px;line-height:24px;color:#0b57d0;font-weight:bold;letter-spacing:1.1px;">February 2026</div>
<div style="position:absolute;left:1047px;top:1471px;white-space:pre;font-size:18.5px;line-height:24px;color:#444746;letter-spacing:1.1px;">January 2026</div>
<div style="position:absolute;left:1231px;top:1471px;white-space:pre;font-size:18.5px;line-height:24px;color:#444746;letter-spacing:1.1px;">December 2025</div>
<div style="position:absolute;left:1435px;top:1471px;white-space:pre;font-size:18.5px;line-height:24px;color:#444746;letter-spacing:1.1px;">November 2025</div>
<div style="position:absolute;left:1673px;top:1471px;white-space:pre;font-size:18.5px;line-height:24px;color:#444746;letter-spacing:1.1px;">October 2025</div>
<div style="position:absolute;left:1638px;top:1467px;width:26px;height:26px;border-radius:13px 13px 13px 0;background:#cfd5de;text-align:center;font-size:15px;line-height:26px;font-weight:bold;color:#1f1f1f">3</div>
<div style="position:absolute;left:1858px;top:1471px;white-space:pre;font-size:18.5px;line-height:24px;color:#444746;letter-spacing:1.1px;">September 2025</div>
<div style="position:absolute;left:2068px;top:1471px;white-space:pre;font-size:18.5px;line-height:24px;color:#444746;letter-spacing:1.1px;">August 2025</div>
<div style="position:absolute;left:2276px;top:1471px;white-space:pre;font-size:18.5px;line-height:24px;color:#444746;letter-spacing:1.1px;">July 2025</div>
<div style="position:absolute;left:2241px;top:1467px;width:26px;height:26px;border-radius:13px 13px 13px 0;background:#cfd5de;text-align:center;font-size:15px;line-height:26px;font-weight:bold;color:#1f1f1f">2</div>
<div style="position:absolute;left:2459px;top:1471px;white-space:pre;font-size:18.5px;line-height:24px;color:#444746;letter-spacing:1.1px;">J</div>
<div style="position:absolute;left:2424px;top:1467px;width:26px;height:26px;border-radius:13px 13px 13px 0;background:#cfd5de;text-align:center;font-size:15px;line-height:26px;font-weight:bold;color:#1f1f1f">1</div>
<svg style="position:absolute;left:396px;top:1474px" width="16" height="16" viewBox="0 0 16 16" fill="#444746"><path d="M3 6l5 5 5-5z"/></svg>
<svg style="position:absolute;left:557px;top:1474px" width="16" height="16" viewBox="0 0 16 16" fill="#444746"><path d="M3 6l5 5 5-5z"/></svg>
<svg style="position:absolute;left:807px;top:1474px" width="16" height="16" viewBox="0 0 16 16" fill="#444746"><path d="M3 6l5 5 5-5z"/></svg>
<svg style="position:absolute;left:1003px;top:1474px" width="16" height="16" viewBox="0 0 16 16" fill="#0b57d0"><path d="M3 6l5 5 5-5z"/></svg>
<svg style="position:absolute;left:1184px;top:1474px" width="16" height="16" viewBox="0 0 16 16" fill="#444746"><path d="M3 6l5 5 5-5z"/></svg>
<svg style="position:absolute;left:1389px;top:1474px" width="16" height="16" viewBox="0 0 16 16" fill="#444746"><path d="M3 6l5 5 5-5z"/></svg>
<svg style="position:absolute;left:1593px;top:1474px" width="16" height="16" viewBox="0 0 16 16" fill="#444746"><path d="M3 6l5 5 5-5z"/></svg>
<svg style="position:absolute;left:1812px;top:1474px" width="16" height="16" viewBox="0 0 16 16" fill="#444746"><path d="M3 6l5 5 5-5z"/></svg>
<svg style="position:absolute;left:2023px;top:1474px" width="16" height="16" viewBox="0 0 16 16" fill="#444746"><path d="M3 6l5 5 5-5z"/></svg>
<svg style="position:absolute;left:2195px;top:1474px" width="16" height="16" viewBox="0 0 16 16" fill="#444746"><path d="M3 6l5 5 5-5z"/></svg>
<svg style="position:absolute;left:2377px;top:1474px" width="16" height="16" viewBox="0 0 16 16" fill="#444746"><path d="M3 6l5 5 5-5z"/></svg>
</div></body></html>
